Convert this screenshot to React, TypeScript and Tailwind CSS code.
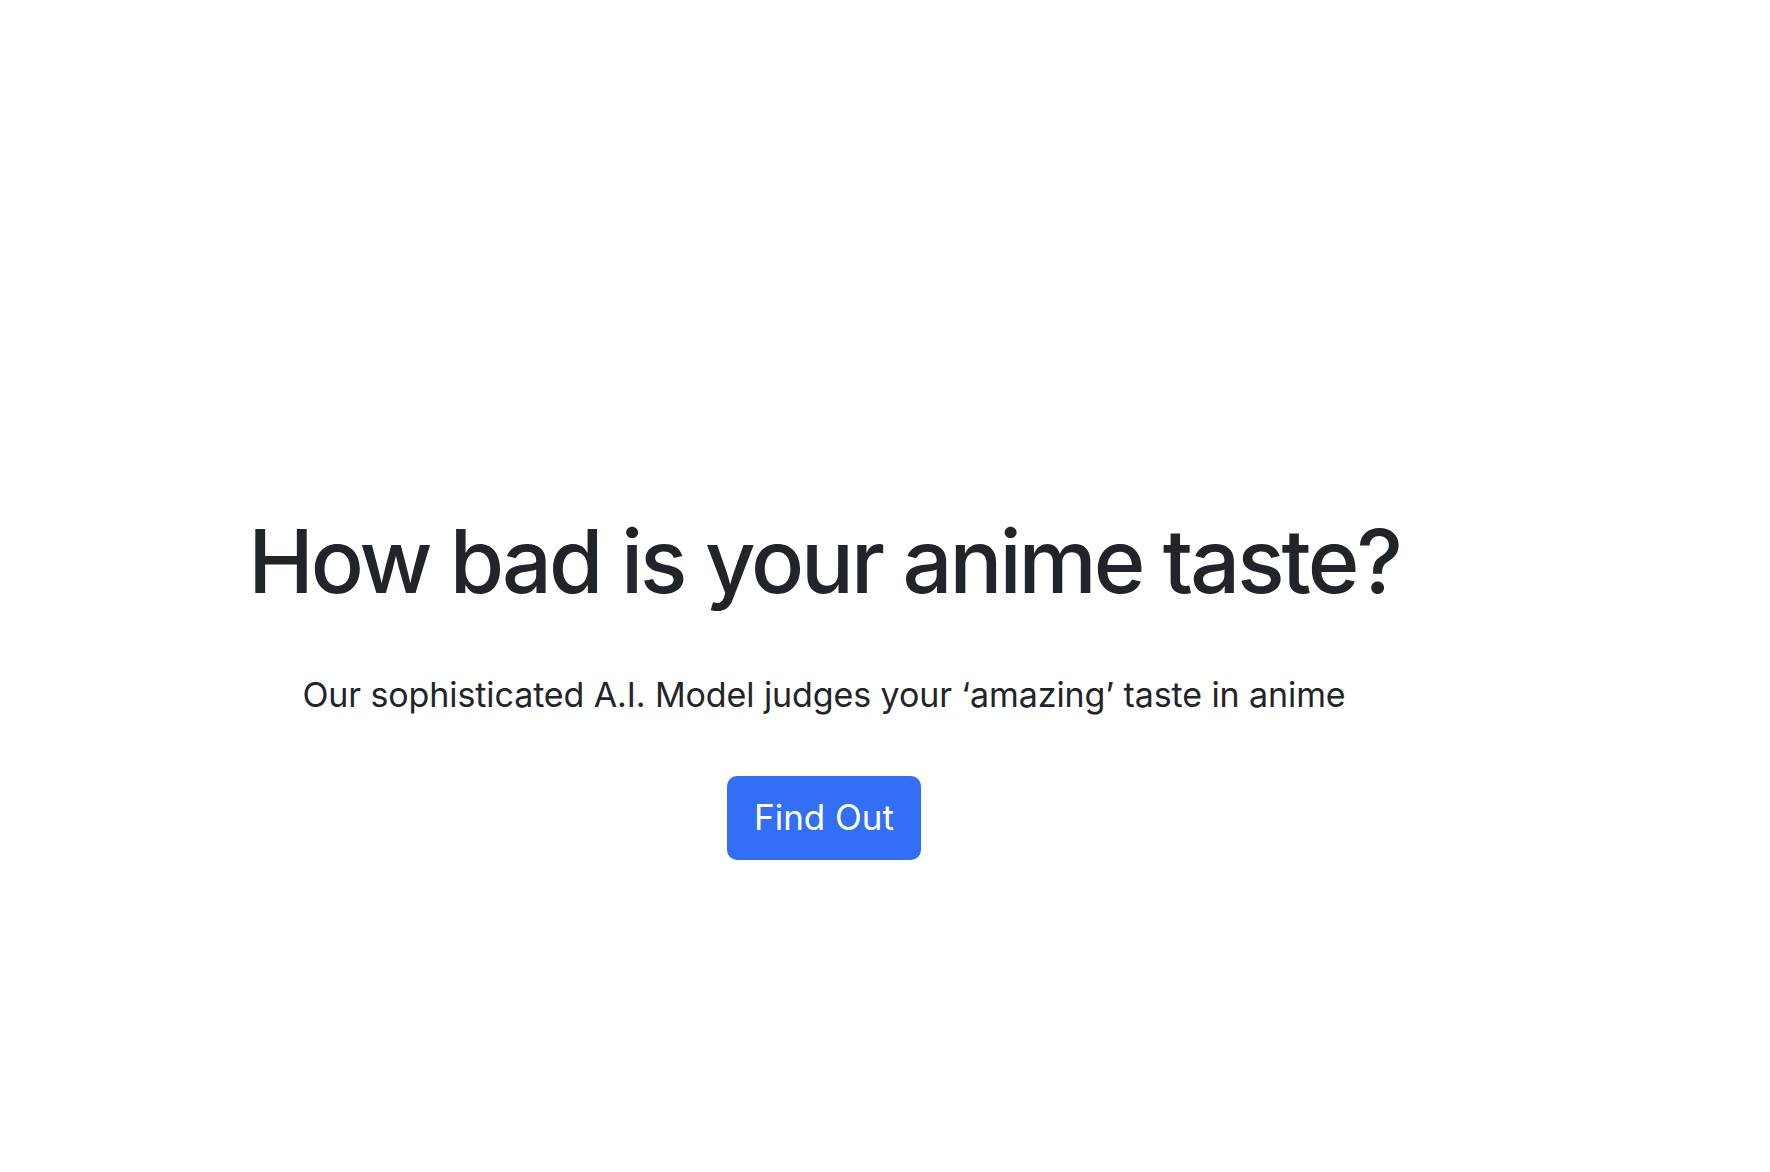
export default function App() {
  return (
    <div className="min-h-[1172px] w-full bg-white" style={{ fontFamily: "Inter, 'Noto Sans', sans-serif" }}>
      <div className="w-[1648px] flex flex-col items-center text-center pt-[509px] text-[#212529]">
        <h1 className="text-[88px] leading-[1.2] font-medium tracking-[-3px]">How bad is your anime taste?</h1>
        <p className="mt-[54px] text-[34px] leading-[1.5] tracking-[-0.1px]">Our sophisticated A.I. Model judges your ‘amazing’ taste in anime</p>
        <button className="mt-[56px] h-[84px] w-[194px] rounded-[10px] bg-[#336ff5] text-white text-[35px] leading-none">Find Out</button>
      </div>
    </div>
  );
}
